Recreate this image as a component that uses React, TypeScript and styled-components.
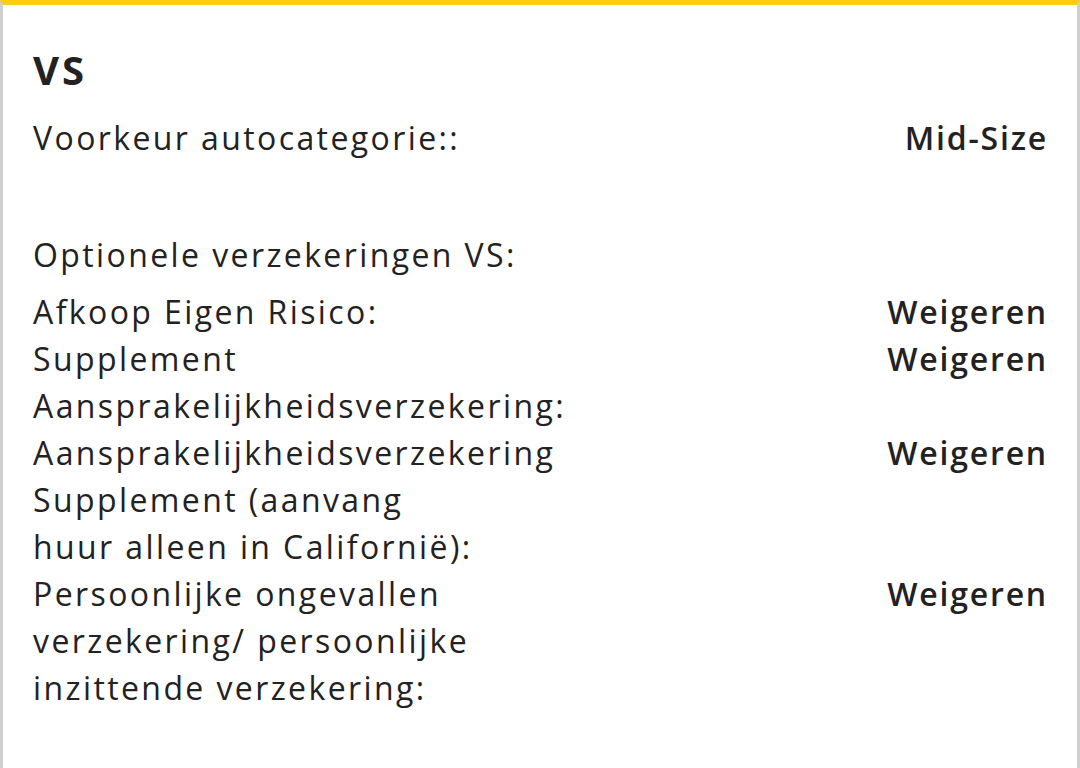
import React from "react";
import styled, { createGlobalStyle } from "styled-components";

interface Option {
  label: string;
  value: string;
}

const options: Option[] = [
  { label: "Afkoop Eigen Risico:", value: "Weigeren" },
  { label: "Supplement Aansprakelijkheidsverzekering:", value: "Weigeren" },
  {
    label: "Aansprakelijkheidsverzekering Supplement (aanvang huur alleen in Californië):",
    value: "Weigeren",
  },
  {
    label: "Persoonlijke ongevallen verzekering/ persoonlijke inzittende verzekering:",
    value: "Weigeren",
  },
];

const App = () => {
  return (
    <>
      <GlobalStyle />
      <Card>
        <Title>VS</Title>
        <Row>
          <Label>Voorkeur autocategorie::</Label>
          <Value>Mid-Size</Value>
        </Row>

        <SectionHeading>Optionele verzekeringen VS:</SectionHeading>
        <List>
          {options.map(option => (
            <Row key={option.label}>
              <Label narrow>{option.label}</Label>
              <Value>{option.value}</Value>
            </Row>
          ))}
        </List>
      </Card>
    </>
  );
};

const GlobalStyle = createGlobalStyle`
  html, body {
    margin: 0;
    padding: 0;
    background: #ffffff;
  }

  body {
    font-family: "Open Sans", Lato, sans-serif;
    color: #222222;
  }
`;

const Card = styled.div`
  box-sizing: border-box;
  min-height: 768px;
  padding: 41px 31px 0 30px;

  background-color: #ffffff;
  border-top: 5px solid #fccf12;
  border-left: 3px solid #cfcfcf;
  border-right: 3px solid #cfcfcf;
`;

const Title = styled.h2`
  margin: 0 0 20px;
  font-size: 40px;
  line-height: 48px;
  font-weight: 700;
  letter-spacing: 3px;
`;

const Row = styled.div`
  display: flex;
  justify-content: space-between;
  align-items: flex-start;
  font-size: 32px;
  line-height: 47px;
  letter-spacing: 2.4px;
`;

interface LabelProps {
  narrow?: boolean;
}

const Label = styled.div<LabelProps>`
  max-width: ${({ narrow }) => (narrow ? "442px" : "none")};
  font-weight: 400;
`;

const Value = styled.div`
  margin-right: -2px;
  font-weight: 600;
  letter-spacing: 1.8px;
  white-space: nowrap;
`;

const SectionHeading = styled.div`
  margin: 70px 0 10px;
  font-size: 32px;
  line-height: 47px;
  letter-spacing: 2.4px;
`;

const List = styled.div`
  display: flex;
  flex-direction: column;
`;

export default App;
